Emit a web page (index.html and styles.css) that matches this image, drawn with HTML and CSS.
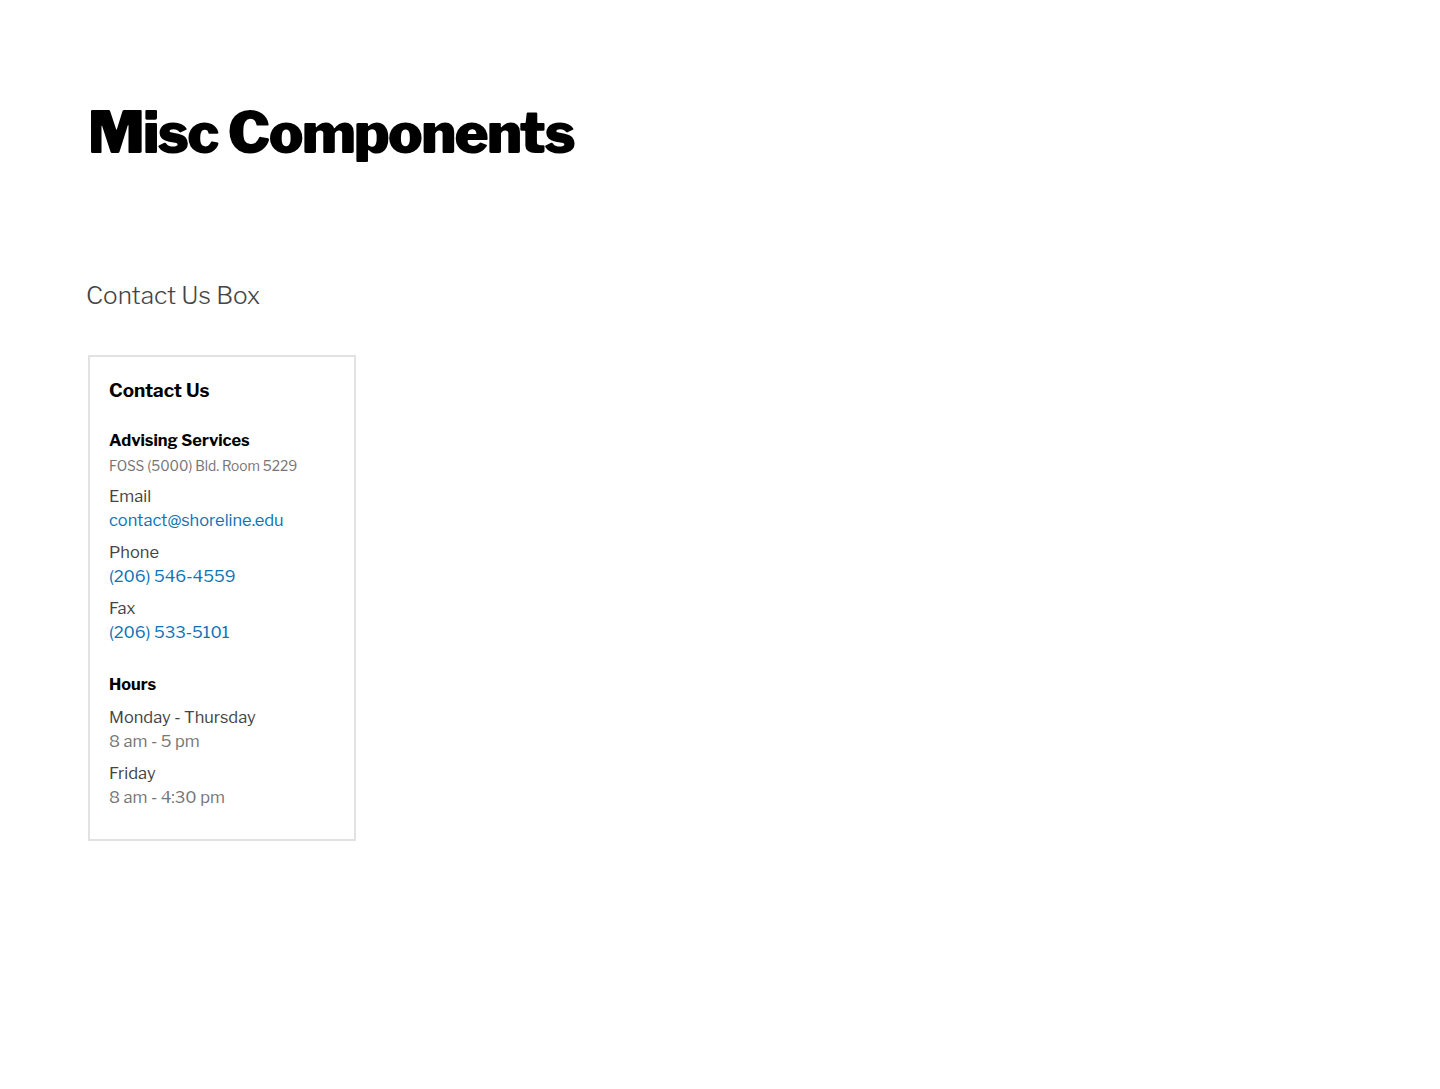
FILE: index.html
```html
<!DOCTYPE html>
<html lang="en">
<head>
<meta charset="utf-8">
<title>Misc Components</title>
<link rel="stylesheet" href="styles.css">
</head>
<body>
<main class="page">
  <h1 class="page-title">Misc Components</h1>
  <section class="demo">
    <h2 class="demo-title">Contact Us Box</h2>
    <aside class="contact-box">
      <h3 class="contact-title">Contact Us</h3>
      <h4 class="contact-sub">Advising Services</h4>
      <p class="contact-loc">FOSS (5000) Bld. Room 5229</p>
      <dl class="contact-list">
        <div class="item"><dt>Email</dt><dd><a href="#">contact@shoreline.edu</a></dd></div>
        <div class="item"><dt>Phone</dt><dd><a href="#">(206) 546-4559</a></dd></div>
        <div class="item"><dt>Fax</dt><dd><a href="#">(206) 533-5101</a></dd></div>
      </dl>
      <h4 class="contact-sub hours">Hours</h4>
      <dl class="contact-list">
        <div class="item"><dt>Monday - Thursday</dt><dd class="time">8 am - 5 pm</dd></div>
        <div class="item"><dt>Friday</dt><dd class="time">8 am - 4:30 pm</dd></div>
      </dl>
    </aside>
  </section>
</main>
</body>
</html>
```
FILE: styles.css
```css
html, body {
  margin: 0;
  padding: 0;
  background: #fff;
}
body {
  font-family: "Libre Franklin", Inter, "Liberation Sans", sans-serif;
  color: #444;
}
.page {
  padding: 96px 88px 0 88px;
}
.page-title {
  margin: 0;
  font-size: 58px;
  font-weight: 900;
  line-height: 72px;
  color: #000;
  letter-spacing: -1.7px;
}
.demo {
  margin-top: 111px;
}
.demo-title {
  margin: 0 0 0 -2px;
  font-size: 24.4px;
  font-weight: 300;
  line-height: 32px;
  color: #444;
}
.contact-box {
  margin-top: 44px;
  width: 226px;
  border: 2px solid #e2e2e2;
  padding: 21px 19px 30px 19px;
}
.contact-title {
  margin: 0;
  font-size: 18.9px;
  font-weight: 700;
  line-height: 26px;
  color: #000;
}
.contact-sub {
  margin: 24px 0 0 0;
  font-size: 16.35px;
  font-weight: 700;
  line-height: 24px;
  color: #000;
}
.contact-sub.hours {
  margin-top: 28px;
}
.contact-loc {
  margin: 4px 0 0 0;
  font-size: 13.7px;
  line-height: 20px;
  color: #757575;
}
.contact-list {
  margin: 0;
}
.contact-loc + .contact-list .item:first-child {
  margin-top: 8px;
}
.item {
  margin-top: 8px;
}
.hours + .contact-list .item:first-child {
  margin-top: 9px;
}
.item dt {
  font-size: 16.45px;
  line-height: 24px;
  color: #444;
}
.item dd {
  margin: 0;
  font-size: 16.45px;
  line-height: 24px;
}
.item dd a {
  color: #0e72b5;
  text-decoration: none;
}
.item dd.time {
  color: #767676;
}
```
